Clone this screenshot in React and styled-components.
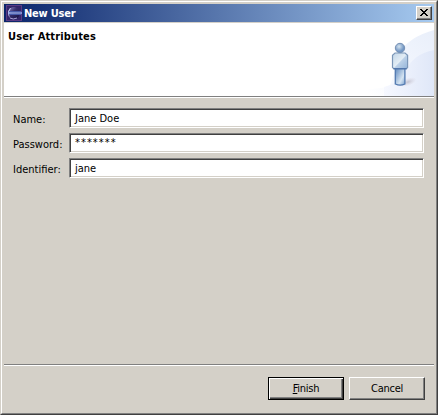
import React from "react";
import styled, { createGlobalStyle, css } from "styled-components";

const GlobalStyle = createGlobalStyle`
  * { box-sizing: border-box; }
  body { margin: 0; background: #d4d0c8; overflow: hidden; }
`;

const raised = css`
  border: 1px solid;
  border-color: #fff #404040 #404040 #fff;
  box-shadow: inset -1px -1px #808080;
`;

const Window = styled.div`
  width: 438px;
  height: 415px;
  border: 1px solid;
  border-color: #d4d0c8 #404040 #404040 #d4d0c8;
  background: #d4d0c8;
  font: 11px/14px "DejaVu Sans Condensed", "DejaVu Sans", sans-serif;
  color: #000;
`;

const Frame = styled.div`
  height: 100%;
  display: flex;
  flex-direction: column;
  border: 1px solid;
  border-color: #fff #808080 #808080 #fff;
  padding: 2px;
`;

const TitleBar = styled.div`
  height: 18px;
  flex: none;
  display: flex;
  align-items: center;
  padding: 0 2px;
  gap: 2px;
  background: linear-gradient(90deg, #0a246a, #a6caf0);
`;

const Label = styled.span`
  display: inline-block;
  white-space: nowrap;
  letter-spacing: ${(p) => p.$track || 0}px;
  font-weight: ${(p) => (p.$bold ? 700 : 400)};
  color: ${(p) => (p.$light ? "#fff" : "#000")};
`;

const TitleText = styled(Label)`
  padding-top: 2px;
`;

const CloseButton = styled.button`
  ${raised}
  width: 16px;
  height: 14px;
  margin-left: auto;
  padding: 0 1px 1px 0;
  display: flex;
  align-items: center;
  justify-content: center;
  background: #d4d0c8;
`;

const Banner = styled.header`
  height: 75px;
  flex: none;
  display: flex;
  justify-content: space-between;
  margin-top: 1px;
  padding: 7px 0 0 4px;
  background: #fff;
  border-bottom: 1px solid #fff;
  box-shadow: inset 0 -1px #808080;
`;

const BannerArt = styled.svg`
  width: 75px;
  height: 73px;
  margin-top: -7px;
`;

const Form = styled.form`
  flex: 1;
  display: grid;
  grid-template-columns: 56px 355px;
  grid-auto-rows: 20px;
  row-gap: 5px;
  padding: 10px 0 0 9px;
`;

const FieldLabel = styled.label`
  padding-top: 5px;
`;

const Field = styled.div`
  border: 1px solid;
  border-color: #808080 #fff #fff #808080;
  box-shadow: inset 1px 1px #404040, inset -1px -1px #d4d0c8;
  background: #fff;
  padding: ${(p) => (p.$masked ? 2 : 3)}px 5px 0;
`;

const Footer = styled.footer`
  height: 47px;
  flex: none;
  display: flex;
  gap: 5px;
  justify-content: flex-end;
  padding: 12px 9px 0 0;
  border-top: 1px solid #808080;
  box-shadow: inset 0 1px #fff;
`;

const Button = styled.button`
  ${raised}
  width: 76px;
  height: 23px;
  padding: 0;
  font: inherit;
  letter-spacing: -0.25px;
  color: #000;
  background: #d4d0c8;
  ${(p) => p.$primary && css`
    border-color: #000;
    box-shadow: inset 1px 1px #fff, inset -1px -1px #404040, inset -2px -2px #808080;
  `}
`;

const fields = [
  { label: "Name:", value: "Jane Doe" },
  { label: "Password:", value: "*******", masked: true },
  { label: "Identifier:", value: "jane" },
];

const AppIcon = () => (
  <svg width="16" height="16" viewBox="0 0 16 16">
    <defs>
      <linearGradient id="orb" x1="0" y1="0" x2="1" y2="1">
        <stop stopColor="#9a93cc" />
        <stop offset=".4" stopColor="#39306e" />
        <stop offset="1" stopColor="#120c3c" />
      </linearGradient>
    </defs>
    <rect width="16" height="16" fill="#5a3a84" />
    <rect x="1" y="1" width="14" height="14" fill="#332569" />
    <circle cx="8" cy="8" r="6" fill="url(#orb)" />
    <path d="M4 3Q0 8 4 13Q2 8 5 3Z" fill="#c3c4ea" />
    <path d="M4 13Q7 15 11 13" fill="none" stroke="#a9a3d8" />
    <path d="M3 6.5h12M3 9.5h12" stroke="#4558a8" />
    <path d="M2 8h14" stroke="#9ab4f4" strokeWidth="1.4" />
  </svg>
);

const UserArt = () => (
  <BannerArt viewBox="0 0 75 73">
    <defs>
      <linearGradient id="outerSwoosh" x1="0" y1="1" x2="1" y2="0">
        <stop offset=".05" stopColor="#fff" />
        <stop offset=".4" stopColor="#f4f7fe" />
        <stop offset="1" stopColor="#e9effa" />
      </linearGradient>
      <linearGradient id="innerSwoosh" x1="0" y1=".5" x2="1" y2=".5">
        <stop stopColor="#f6f8ff" />
        <stop offset="1" stopColor="#dfe7f8" />
      </linearGradient>
      <linearGradient id="figure" x1="0" y1="0" x2="1" y2="1">
        <stop stopColor="#c2d6e8" />
        <stop offset=".5" stopColor="#e3edf5" />
        <stop offset=".55" stopColor="#bcd1e8" />
        <stop offset="1" stopColor="#94b4d9" />
      </linearGradient>
      <linearGradient id="legs" x1="0" y1="0" x2="1" y2="1">
        <stop stopColor="#5d87bd" />
        <stop offset=".65" stopColor="#d5e4f2" />
        <stop offset="1" stopColor="#7ba1cd" />
      </linearGradient>
      <radialGradient id="head" cx=".4" cy=".35">
        <stop stopColor="#d4e3ef" />
        <stop offset="1" stopColor="#7397c4" />
      </radialGradient>
      <radialGradient id="shadow">
        <stop stopColor="#b9b8c6" stopOpacity=".8" />
        <stop offset="1" stopColor="#d9d5df" stopOpacity="0" />
      </radialGradient>
    </defs>
    <path d="M75 7Q50 14 40 30Q35 55 30 64L5 67V73H75Z" fill="url(#outerSwoosh)" />
    <path d="M75 27Q53 31 46 50Q40 60 25 64V73H75Z" fill="url(#innerSwoosh)" />
    <ellipse cx="49" cy="59" rx="9" ry="4" fill="url(#shadow)" transform="rotate(-20 49 59)" />
    <path d="M36.3 45h9.6v16q-4.8 2.4-9.6 0Z" fill="url(#legs)" stroke="#5279b0" strokeWidth="1.3" />
    <path d="M36 30h10l2.6 2.2V44.5l-1.2 1.2H34.8l-1.3-1.2V32.2Z" fill="url(#figure)" stroke="#7c97b8" strokeWidth="1.2" />
    <path d="M34.5 45.8h13.2" stroke="#486fa9" strokeWidth="1.2" />
    <circle cx="41" cy="25" r="4.7" fill="url(#head)" stroke="#7590b4" />
  </BannerArt>
);

export default function App() {
  return (
    <>
      <GlobalStyle />
      <Window>
        <Frame>
          <TitleBar>
            <AppIcon />
            <TitleText $bold $light $track={-0.2}>New User</TitleText>
            <CloseButton aria-label="Close">
              <svg width="8" height="7" viewBox="0 0 8 7" shapeRendering="crispEdges">
                <path d="M0 0h2v1h1v1h2V1h1V0h2v1H7v1H6v1H5v1h1v1h1v1h1v1H6V6H5V5H3v1H2v1H0V6h1V5h1V4h1V3H2V2H1V1H0Z" />
              </svg>
            </CloseButton>
          </TitleBar>
          <Banner>
            <Label $bold $track={0.14}>User Attributes</Label>
            <UserArt />
          </Banner>
          <Form>
            {fields.map((f) => (
              <React.Fragment key={f.label}>
                <FieldLabel><Label>{f.label}</Label></FieldLabel>
                <Field $masked={f.masked}><Label $track={f.masked ? 1 : 0}>{f.value}</Label></Field>
              </React.Fragment>
            ))}
          </Form>
          <Footer>
            <Button $primary><u>F</u>inish</Button>
            <Button>Cancel</Button>
          </Footer>
        </Frame>
      </Window>
    </>
  );
}
